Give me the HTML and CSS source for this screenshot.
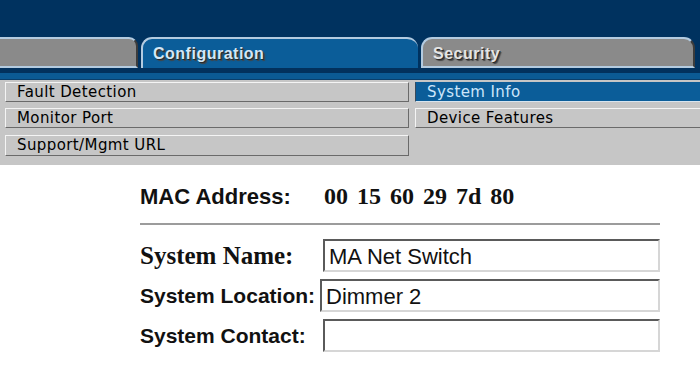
FILE: index.html
```html
<!DOCTYPE html>
<html lang="en">
<head>
  <meta charset="UTF-8" />
  <title>System Info</title>
  <link rel="stylesheet" href="styles.css">
</head>
<body>
  <div class="banner"></div>

  <div class="tabs">
    <div class="tab tab-first"></div>
    <div class="tab tab-active">Configuration</div>
    <div class="tab tab-last">Security</div>
  </div>
  <div class="tab-strip"></div>

  <div class="subnav">
    <a class="nav-btn">Fault Detection</a>
    <a class="nav-btn nav-active">System Info</a>
    <a class="nav-btn">Monitor Port</a>
    <a class="nav-btn">Device Features</a>
    <a class="nav-btn">Support/Mgmt URL</a>
  </div>

  <div class="content">
    <div class="mac-row">
      <span class="mac-label">MAC Address:</span>
      <span class="mac-value">00 15 60 29 7d 80</span>
    </div>
    <hr class="divider">

    <div class="field-row">
      <label class="field-label serif-label" for="sysname">System Name:</label>
      <input class="field-input" id="sysname" type="text" value="MA Net Switch">
    </div>
    <div class="field-row">
      <label class="field-label wide-label" for="sysloc">System Location:</label>
      <input class="field-input" id="sysloc" type="text" value="Dimmer 2">
    </div>
    <div class="field-row">
      <label class="field-label" for="syscontact">System Contact:</label>
      <input class="field-input" id="syscontact" type="text" value="">
    </div>
  </div>
</body>
</html>
```

FILE: styles.css
```css
body {
  margin: 0;
  padding: 0;
  background: white;
  font-family: 'Liberation Sans', Arial, sans-serif;
  overflow: hidden;
}

.banner {
  height: 37px;
  background: #00325f;
}

.tabs {
  display: flex;
  gap: 3px;
  height: 31px;
  background: #00325f;
  padding-right: 5px;
}

.tab {
  box-sizing: border-box;
  height: 31px;
  background: #8a8a8a;
  border-top: 2px solid #b3cbe0;
  border-left: 2px solid #b3cbe0;
  border-right: 2px solid #3c3c3c;
  border-bottom: 2px solid #b3cbe0;
  border-radius: 11px 11px 0 0;
  padding: 6px 0 0 10px;
  font-weight: bold;
  font-size: 16px;
  letter-spacing: 0.5px;
  color: #e4e4e4;
  text-shadow: 1px 1px 0 #2a2a2a, 2px 2px 1px #444;
}

.tab-first {
  width: 138px;
  border-left: none;
  border-radius: 0 9px 0 0;
}

.tab-active {
  width: 277px;
  background: #0b5d99;
  border-right: none;
  border-bottom: none;
  color: #d3e7f7;
}

.tab-last {
  flex: 1;
}

.tab-strip {
  height: 12px;
  background: linear-gradient(to bottom, #02315d 0, #02315d 5px, #0b5a94 5px, #0b5a94 11px, #0a3f6c 11px);
}

.subnav {
  display: grid;
  grid-template-columns: 404px 1fr;
  column-gap: 6px;
  row-gap: 6px;
  padding: 2px 0 9px 5px;
  background: #c6c6c6;
}

.nav-btn {
  box-sizing: border-box;
  height: 20px;
  background: #c6c6c6;
  border-top: 1px solid #f4f4f4;
  border-left: 1px solid #f4f4f4;
  border-bottom: 1px solid #6a6a6a;
  border-right: 1px solid #6a6a6a;
  padding: 0 0 0 11px;
  font-family: 'DejaVu Sans', sans-serif;
  font-size: 15px;
  line-height: 19px;
  letter-spacing: 0.4px;
  color: #000;
}

.nav-btn:nth-child(even) {
  border-right: none;
}

.nav-btn:nth-child(5) {
  height: 21px;
  margin-top: 1px;
}

.nav-active {
  background: #0b5d99;
  border-top-color: #0b5d99;
  border-left: 1px solid #3a4a5a;
  border-bottom-color: #d8e4ee;
  color: #cde6fb;
}

.content {
  width: 520px;
  padding: 18px 0 0 140px;
}

.mac-row {
  display: flex;
  align-items: baseline;
  height: 26px;
}

.mac-label {
  width: 184px;
  font-size: 22px;
  font-weight: bold;
  color: #111;
}

.mac-value {
  font-family: 'Liberation Serif', 'Times New Roman', serif;
  font-weight: bold;
  font-size: 24px;
  word-spacing: 3px;
  color: #111;
}

.divider {
  border: none;
  height: 2px;
  background: #9c9c9c;
  margin: 14px 0 14px 0;
}

.field-row {
  display: flex;
  align-items: center;
  margin-bottom: 7px;
}

.field-label {
  min-width: 183px;
  font-size: 21px;
  font-weight: bold;
  color: #111;
}

.serif-label {
  font-family: 'Liberation Serif', 'Times New Roman', serif;
  font-size: 25px;
}

.wide-label {
  min-width: 180px;
}

.field-input {
  flex: 1;
  box-sizing: border-box;
  height: 33px;
  padding: 2px 4px 0 4px;
  border-top: 2px solid #5a5a5a;
  border-left: 2px solid #5a5a5a;
  border-bottom: 2px solid #d6d6d6;
  border-right: 2px solid #d6d6d6;
  font-family: 'Liberation Sans', Arial, sans-serif;
  font-size: 22px;
  color: #111;
  background: white;
}
```
